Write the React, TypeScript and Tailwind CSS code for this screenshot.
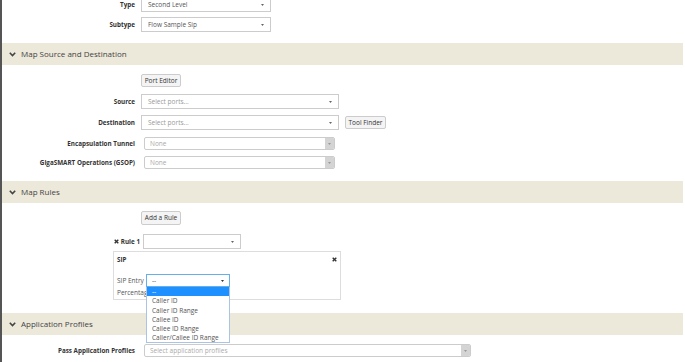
import React from 'react';

const Caret = ({ color = '#666' }: { color?: string }) => (
  <svg width="3" height="2" viewBox="0 0 3 2" className="shrink-0">
    <path d="M0 0H3L1.5 2Z" fill={color} />
  </svg>
);

const Chevron = () => (
  <svg width="7" height="5" viewBox="0 0 7 5" className="shrink-0">
    <path d="M0.8 0.8L3.5 3.6L6.2 0.8" fill="none" stroke="#444" strokeWidth="1.6" />
  </svg>
);

const XMark = () => (
  <svg width="5" height="5" viewBox="0 0 5 5" className="shrink-0">
    <path d="M0.7 0.7L4.3 4.3M4.3 0.7L0.7 4.3" stroke="#333" strokeWidth="1.4" />
  </svg>
);

const Select = ({ value, placeholder, width, focus }: { value?: string; placeholder?: string; width: string; focus?: boolean }) => (
  <div
    className={`${width} h-[15px] flex items-center justify-between px-[6px] bg-white border ${focus ? 'border-[#66afe9]' : 'border-[#ccc]'}`}
  >
    <span className={`text-[6.5px] ${value ? 'text-[#555]' : 'text-[#999]'}`}>{value ?? placeholder}</span>
    <Caret />
  </div>
);

const DisabledSelect = ({ text, width }: { text: string; width: string }) => (
  <div className={`${width} h-[13px] flex items-stretch bg-white border border-[#ccc] rounded-[2px] overflow-hidden`}>
    <span className="flex-1 flex items-center px-[5px] text-[6.5px] text-[#aaa]">{text}</span>
    <span className="w-[9px] bg-[#d4d4d4] flex items-center justify-center">
      <Caret color="#999" />
    </span>
  </div>
);

const Button = ({ children, width }: { children: React.ReactNode; width: string }) => (
  <div className={`${width} h-[13px] flex items-center justify-center bg-[#f4f4f4] border border-[#ccc] rounded-[2px] text-[6.5px] text-[#333]`}>
    {children}
  </div>
);

const Label = ({ children }: { children: React.ReactNode }) => (
  <div className="w-[133px] shrink-0 text-right font-bold text-[6.3px] text-[#333]">{children}</div>
);

const Header = ({ title, className }: { title: string; className: string }) => (
  <div className={`${className} h-[22px] bg-[#ece8da] flex items-center gap-[5px] pl-[7px] text-[8px] text-[#444]`}>
    <Chevron />
    <span>{title}</span>
  </div>
);

const options = ['Caller ID', 'Caller ID Range', 'Callee ID', 'Callee ID Range', 'Caller/Callee ID Range'];

export default function App() {
  return (
    <div className="min-h-screen w-full bg-white border-l-2 border-[#555] pr-[2px] font-['Open_Sans',sans-serif] overflow-hidden">
      <div className="-mt-[3px] flex flex-col">
        <div className="flex items-center">
          <Label>Type</Label>
          <div className="ml-[6px]">
            <Select value="Second Level" width="w-[130px]" />
          </div>
        </div>
        <div className="flex items-center mt-[5px]">
          <Label>Subtype</Label>
          <div className="ml-[6px]">
            <Select value="Flow Sample Sip" width="w-[130px]" />
          </div>
        </div>

        <Header title="Map Source and Destination" className="mt-[11px]" />

        <div className="flex mt-[9px] pl-[139px]">
          <Button width="w-[40px]">Port Editor</Button>
        </div>
        <div className="flex items-center mt-[7px]">
          <Label>Source</Label>
          <div className="ml-[6px]">
            <Select placeholder="Select ports..." width="w-[198px]" />
          </div>
        </div>
        <div className="flex items-center mt-[6px]">
          <Label>Destination</Label>
          <div className="ml-[6px]">
            <Select placeholder="Select ports..." width="w-[198px]" />
          </div>
          <div className="ml-[6px]">
            <Button width="w-[41px]">Tool Finder</Button>
          </div>
        </div>
        <div className="flex items-center mt-[7px]">
          <Label>Encapsulation Tunnel</Label>
          <div className="ml-[9px]">
            <DisabledSelect text="None" width="w-[191px]" />
          </div>
        </div>
        <div className="flex items-center mt-[6px]">
          <Label>GigaSMART Operations (GSOP)</Label>
          <div className="ml-[9px]">
            <DisabledSelect text="None" width="w-[191px]" />
          </div>
        </div>

        <Header title="Map Rules" className="mt-[12px]" />

        <div className="flex mt-[8px] pl-[139px]">
          <Button width="w-[40px] h-[14px]">Add a Rule</Button>
        </div>
        <div className="flex items-center mt-[9px]">
          <div className="w-[138px] shrink-0 flex items-center justify-end gap-[2px] font-bold text-[6.3px] text-[#333]">
            <XMark />
            <span>Rule 1</span>
          </div>
          <div className="ml-[3px]">
            <Select width="w-[98px]" placeholder="" />
          </div>
        </div>

        <div className="ml-[111px] mt-[2px] w-[228px] h-[49px] border border-[#ddd] relative z-10">
          <div className="flex items-center justify-between px-[3px] pt-[3px]">
            <span className="font-bold text-[6.3px] text-[#333]">SIP</span>
            <XMark />
          </div>
          <div className="flex items-center mt-[10px] pl-[3px]">
            <span className="w-[29px] text-[6.5px] text-[#555]">SIP Entry</span>
            <div className="relative">
              <div className="w-[84px] h-[13px] flex items-center justify-between px-[5px] bg-white border border-[#66afe9]">
                <span className="text-[6.5px] text-[#555]">--</span>
                <Caret color="#333" />
              </div>
              <div className="absolute left-0 top-full w-[84px] bg-white border border-[#aac4e6] border-t-0 flex flex-col">
                <div className="h-[9px] bg-[#1e90ff] text-white text-[6.5px] leading-[9px] px-[5px]">--</div>
                {options.map((o) => (
                  <div key={o} className="h-[9.2px] text-[6.5px] leading-[9.2px] px-[5px] text-[#555]">
                    {o}
                  </div>
                ))}
              </div>
            </div>
          </div>
          <div className="pl-[3px] mt-[1px] text-[6.5px] text-[#555]">Percentage</div>
        </div>

        <Header title="Application Profiles" className="mt-[13px]" />

        <div className="flex items-center mt-[9px]">
          <Label>Pass Application Profiles</Label>
          <div className="ml-[9px]">
            <DisabledSelect text="Select application profiles" width="w-[327px]" />
          </div>
        </div>
      </div>
    </div>
  );
}
